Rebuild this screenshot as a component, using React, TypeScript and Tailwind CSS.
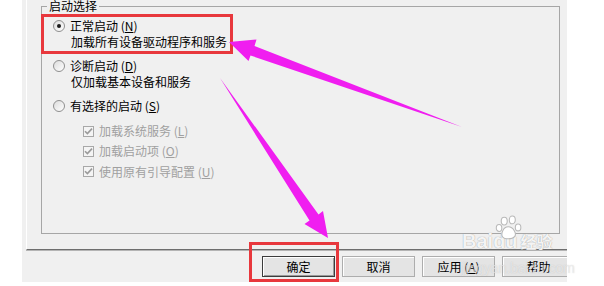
// Windows 系统配置 dialog — 启动选择 tab, with annotation overlays
import type { ReactNode } from 'react';

// ─── Radio button ───
function Radio({ checked = false }: { checked?: boolean }) {
  return (
    <span className="relative inline-flex h-[12px] w-[12px] shrink-0 items-center justify-center rounded-full border border-[#8f8f8f] bg-gradient-to-br from-[#dcdcdc] to-white">
      {checked && <span className="h-[4px] w-[4px] rounded-full bg-[#1a1a1a]" />}
    </span>
  );
}

// ─── Disabled checkbox (checked) ───
function Check() {
  return (
    <span className="inline-flex h-[11px] w-[11px] shrink-0 items-center justify-center border border-[#a8a8a8] bg-[#f4f4f4]">
      <svg width="9" height="9" viewBox="0 0 9 9">
        <path d="M1 4.2 L3.4 6.6 L8 1.6" fill="none" stroke="#9a9a9a" strokeWidth="1.6" />
      </svg>
    </span>
  );
}

function Key({ k }: { k: string }) {
  return (
    <span>
      (<u className="underline-offset-1">{k}</u>)
    </span>
  );
}

function Btn({ children, primary = false }: { children: ReactNode; primary?: boolean }) {
  return (
    <div
      className={`flex h-[21px] w-[73px] shrink-0 items-center justify-center bg-[#e4e4e4] text-[12px] text-black ${
        primary
          ? 'border border-[#3c3c3c] shadow-[inset_1px_1px_0_#fff,inset_-1px_-1px_0_#9a9a9a]'
          : 'border border-[#adadad] shadow-[inset_1px_1px_0_#fff]'
      }`}
    >
      {children}
    </div>
  );
}

// ─── Baidu paw mark for the watermark ───
function Paw() {
  return (
    <svg width="30" height="26" viewBox="0 0 26 22">
      <g fill="#fff" stroke="#b8b8b8" strokeWidth="0.9">
        <ellipse cx="8" cy="5" rx="2.6" ry="3.4" />
        <ellipse cx="15" cy="4" rx="2.6" ry="3.4" />
        <ellipse cx="3.5" cy="11" rx="2.4" ry="3" />
        <ellipse cx="20" cy="10.5" rx="2.4" ry="3" />
        <path d="M11.5 10 C7 10 5 16 6.5 18.5 C8 21 15 21 17 18.5 C19 16 16 10 11.5 10 Z" />
      </g>
    </svg>
  );
}

export default function App() {
  return (
    <div className="relative h-[286px] w-[604px] overflow-hidden bg-white font-['Noto_Sans_CJK_SC','Noto_Sans',sans-serif] text-[12px] leading-none text-black">
      {/* Dialog surface */}
      <div className="ml-[22px] h-[282px] w-[545px] overflow-hidden bg-[#f0f0f0]">
        {/* Tab page */}
        <div className="ml-[4px] h-[250px] w-[560px] border-b border-l border-b-[#6e6e6e] border-l-white pl-[14px] shadow-[0_1px_0_#b4b4b4]">
          <fieldset className="h-[234px] w-[519px] border border-[#a6a6a6]">
            <legend className="ml-[5px] px-[2px] text-[12px] leading-[12px] text-black">启动选择</legend>

            <div className="flex flex-col pl-[11px] pt-[5px]">
              <div className="flex h-[17px] items-center gap-[5px]">
                <Radio checked />
                <span>
                  正常启动 <Key k="N" />
                </span>
              </div>
              <div className="flex h-[16px] items-center pl-[18px]">加载所有设备驱动程序和服务</div>

              <div className="mt-[8px] flex h-[16px] items-center gap-[5px]">
                <Radio />
                <span>
                  诊断启动 <Key k="D" />
                </span>
              </div>
              <div className="flex h-[16px] items-center pl-[18px]">仅加载基本设备和服务</div>

              <div className="mt-[8px] flex h-[16px] items-center gap-[5px]">
                <Radio />
                <span>
                  有选择的启动 <Key k="S" />
                </span>
              </div>

              <div className="mt-[7px] flex flex-col pl-[30px] text-[#a0a0a0]">
                <div className="flex h-[20px] items-center gap-[5px]">
                  <Check />
                  <span>
                    加载系统服务 <Key k="L" />
                  </span>
                </div>
                <div className="flex h-[20px] items-center gap-[5px]">
                  <Check />
                  <span>
                    加载启动项 <Key k="O" />
                  </span>
                </div>
                <div className="flex h-[21px] items-center gap-[5px]">
                  <Check />
                  <span>
                    使用原有引导配置 <Key k="U" />
                  </span>
                </div>
              </div>
            </div>
          </fieldset>
        </div>

        {/* Dialog buttons */}
        <div className="mt-[6px] flex gap-[7px] pl-[240px]">
          <Btn primary>确定</Btn>
          <Btn>取消</Btn>
          <Btn>
            <span>
              应用 <Key k="A" />
            </span>
          </Btn>
          <Btn>帮助</Btn>
        </div>
      </div>

      {/* Watermark */}
      <div className="pointer-events-none absolute left-[462px] top-[233px] flex flex-col">
        <div className="relative flex items-end">
          <span className="font-['Liberation_Sans',sans-serif] text-[20px] font-bold leading-[16px] text-white/90 [text-shadow:0_0_1px_#8a8a8a]">
            Bai
          </span>
          <span className="relative font-['Liberation_Sans',sans-serif] text-[20px] font-bold leading-[16px] text-white/90 [text-shadow:0_0_1px_#8a8a8a]">
            <span className="absolute -top-[18px] left-[2px]">
              <Paw />
            </span>
            du
          </span>
          <span className="ml-[3px] text-[16px] font-bold leading-[16px] text-white/90 [text-shadow:0_0_1px_#8a8a8a]">
            经验
          </span>
        </div>
        <span className="mt-[12px] font-['Liberation_Sans',sans-serif] text-[14px] leading-[14px] text-white/50 [text-shadow:0_0_1px_rgba(160,160,160,0.5)]">
          jingyan.baidu.com
        </span>
      </div>

      {/* Red highlight boxes */}
      <div className="pointer-events-none absolute left-[41px] top-[14px] h-[40px] w-[192px] border-[3px] border-[#e8383d]" />
      <div className="pointer-events-none absolute left-[249px] top-[242px] h-[40px] w-[90px] border-[3px] border-[#e8383d]" />

      {/* Magenta arrows */}
      <svg className="pointer-events-none absolute left-0 top-0" width="604" height="286" viewBox="0 0 604 286">
        <polygon fill="#f01ef0" points="229,42 256.5,39.5 254.5,46 462,127 250.5,55.5 248.5,61" />
        <polygon fill="#f01ef0" points="328,238 304.5,224 309.5,220.5 220,78 318.5,214.5 323,211" />
      </svg>
    </div>
  );
}
